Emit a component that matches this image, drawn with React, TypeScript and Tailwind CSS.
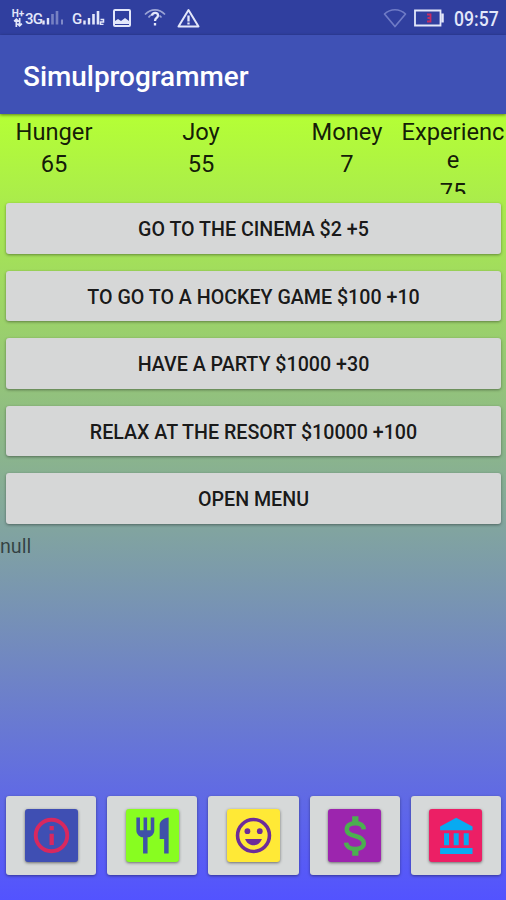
import { ReactNode } from "react"

const stats = [
    { name: "Hunger", value: 65 },
    { name: "Joy", value: 55 },
    { name: "Money", value: 7 },
    { name: "Experience", value: 75 },
]

const actions = [
    "Go to the cinema $2 +5",
    "To go to a hockey game $100 +10",
    "Have a party $1000 +30",
    "Relax at the resort $10000 +100",
    "Open menu",
]

const tabs = [
    {
        name: "Info",
        className: "bg-[#3f4fb3] text-[#d8285f]",
        icon: (
            <>
                <circle cx="12" cy="12" r="8.8" fill="none" stroke="currentColor" strokeWidth="2.2" />
                <path d="M10.9 11h2.4v6.300h-2.400zM10.900 6.700h2.400v2.300h-2.400z" />
            </>
        ),
    },
    {
        name: "Food",
        className: "bg-[#88fd20] text-[#3f51a8]",
        icon: <path d="M11 9H9V2H7v7H5V2H3v7c0 2.12 1.66 3.84 3.75 3.97V22h2.5v-9.03C11.34 12.84 13 11.12 13 9V2h-2v7zm5-3v8h2.5v8H21V2c-2.76 0-5 2.24-5 4z" />,
    },
    {
        name: "Joy",
        className: "bg-[#ffe936] text-[#6d2c99]",
        icon: (
            <>
                <circle cx="12" cy="12" r="8.900" fill="none" stroke="currentColor" strokeWidth="2" />
                <circle cx="8.600" cy="9.600" r="1.600" />
                <circle cx="15.500" cy="9.600" r="1.600" />
                <path d="M7.300 14h9.400c-.8 2.100-2.500 3.500-4.700 3.500S8.100 16.100 7.300 14z" />
            </>
        ),
    },
    {
        name: "Money",
        className: "bg-[#9c25ae] text-[#4caf50]",
        icon: (
            <>
                <path
                    d="M17.200 8.600C17 6.300 15 5.200 12.400 5.200 9.600 5.200 7.700 6.500 7.700 8.500c0 2.500 2.300 3.200 4.700 3.800 2.600.7 4.800 1.700 4.800 4 0 2.200-2.200 3.200-4.800 3.200-2.800 0-4.900-1.200-5.100-3.500"
                    fill="none"
                    stroke="currentColor"
                    strokeWidth="2.500"
                />
                <path d="M10.700 1.200h3.500v4h-3.500zM10.700 19.500h3.500v3.800h-3.500z" />
            </>
        ),
    },
    {
        name: "Bank",
        className: "bg-[#ec1f65] text-[#08aaf1]",
        icon: <path d="M12.400 2.100 21.500 7v2H3.400V7zM5.600 10.800h2.800v6.700H5.600zM11 10.800h2.800v6.700H11zM16.600 10.800h2.800v6.700h-2.800zM3.400 19h18.100v3.300H3.400z" />,
    },
]

const StatusIcon = ({ className, viewBox, children }: { className: string, viewBox: string, children: ReactNode }) => (
    <svg className={className} viewBox={viewBox} fill="none" stroke="currentColor">{children}</svg>
)

const Signal = ({ dim }: { dim: boolean }) => (
    <StatusIcon className="h-[15px] w-[22px] shrink-0" viewBox="0 0 22 15">
        <path d="M1.500 14.500v-4M6 14.500V8" strokeWidth="2.400" />
        <path d="M10.500 14.500V4M15 14.500V1" strokeWidth="2.600" opacity={dim ? 0.4 : 1} />
        <path d={dim ? "M20 9.500v5" : "M17.500 9.500h3v2.500h-3v2.500h3"} strokeWidth="1.500" opacity={dim ? 0.6 : 1} />
    </StatusIcon>
)

const StatusBar = () => (
    <div className="flex h-[35px] shrink-0 items-center bg-[#303f9f] pl-[11px] pr-2 text-[#e3e7fa]">
        <div className="flex w-[14px] flex-col items-center text-[10px] font-bold leading-[9px]">
            <span>H+</span>
            <StatusIcon className="h-[9px] w-[10px]" viewBox="0 0 9 8">
                <path d="M3 8V1M1 3l2-2 2 2M6 0v7M4 5l2 2 2-2" strokeWidth="1.500" />
            </StatusIcon>
        </div>
        <span className="mt-[3px] w-[17px] text-[15px] font-medium leading-none tracking-[-0.800px]">3G</span>
        <div className="mb-px"><Signal dim /></div>
        <span className="ml-2 mt-[3px] w-[11px] text-[15px] font-medium leading-none">G</span>
        <div className="mb-px"><Signal dim={false} /></div>
        <StatusIcon className="ml-2 h-[18px] w-[18px]" viewBox="0 0 18 18">
            <rect x="1" y="1" width="16" height="16" rx="1" strokeWidth="2" />
            <path d="M2 15v-3l3-2 3 2 4-3 4 3v3z" fill="currentColor" stroke="none" />
        </StatusIcon>
        <StatusIcon className="ml-[13px] h-[19px] w-[22px]" viewBox="0 0 22 18">
            <path d="M1 6C7-.3 15-.3 21 6M4.500 9C5.500 7.500 7 6.500 8.500 6M17.500 9l-2-2" strokeWidth="1.700" opacity=".6" />
            <path d="M8 7C8.500 3.500 14 3.500 14 7c0 2.500-3 2.500-3 5.500M11 14.500v2.500" strokeWidth="2.300" />
        </StatusIcon>
        <StatusIcon className="ml-[11px] h-5 w-[23px]" viewBox="0 0 23 20">
            <path d="M11.500 2 21.500 18.500h-20z" strokeWidth="2" strokeLinejoin="round" />
            <path d="M11.500 7.500v6M11.500 14.500v2" strokeWidth="2.300" />
        </StatusIcon>
        <StatusIcon className="ml-auto h-5 w-6 text-[#6f7bc6]" viewBox="0 0 24 20">
            <path d="M1.500 6C7.500.3 16.500.3 22.500 6L12 18.500z" strokeWidth="1.700" strokeLinejoin="round" />
        </StatusIcon>
        <StatusIcon className="ml-[7px] h-[18px] w-[30px]" viewBox="0 0 30 18">
            <path d="M1 1.500h25.500v15H1z" strokeWidth="1.800" />
            <path d="M28.500 4.500v9" strokeWidth="2.500" />
            <path d="M13 5.500h3.500v7H13M13.500 9h3" stroke="#c52c63" strokeWidth="1.800" />
        </StatusIcon>
        <span className="ml-[10px] mt-[3px] w-[44px] origin-left scale-x-[0.880] whitespace-nowrap text-[20px] font-medium leading-none">09:57</span>
    </div>
)

export default function App() {
    return (
        <div className="flex h-[900px] w-[506px] flex-col overflow-hidden font-['Roboto',sans-serif]">
            <StatusBar />
            <header className="z-10 flex h-[79px] shrink-0 items-center bg-[#3f51b5] pl-[23px] pt-[5px] text-[27.9px] font-medium text-white shadow-[0_1px_3px_rgba(0,0,0,0.5)]">
                Simulprogrammer
            </header>
            <main className="flex min-h-0 flex-1 flex-col bg-linear-to-b/srgb from-[#b5ff35] to-[#5353ff]">
                <div className="grid h-20 shrink-0 grid-cols-[108px_186px_106px_106px] overflow-hidden pt-1 text-center text-[23.7px] leading-[28px] text-black/90">
                    {
                        stats.map((stat) => (
                            <div key={stat.name} className="flex flex-col gap-[3.500px]">
                                <div className="break-all">{stat.name}</div>
                                <div>{stat.value}</div>
                            </div>
                        ))
                    }
                </div>
                <div className="mt-[9px] flex flex-col gap-[17px] pl-[6px] pr-[5px]">
                    {
                        actions.map((action) => (
                            <button
                                key={action}
                                className="h-[50.5px] rounded-[3px] bg-[#d6d7d7] pt-[3.500px] text-[19.650px] font-medium uppercase text-black/90 shadow-[0_1px_3px_rgba(0,0,0,0.4)]"
                            >{action}</button>
                        ))
                    }
                </div>
                <p className="mt-[11px] text-[19.7px] leading-[23px] text-black/60">null</p>
                <nav className="mb-[25px] mt-auto grid grid-cols-5 gap-[11px] pl-[6px] pr-[5px]">
                    {
                        tabs.map((tab) => (
                            <button
                                key={tab.name}
                                aria-label={tab.name}
                                className="flex h-[79px] items-center justify-center rounded-[3px] bg-[#d6d9d9] shadow-[0_1px_3px_rgba(0,0,0,0.4)]"
                            >
                                <span className={`flex size-[53px] items-center justify-center rounded-[3px] shadow-[0_1px_3px_rgba(0,0,0,0.5)] ${tab.className}`}>
                                    <svg className="size-[43px]" viewBox="0 0 24 24" fill="currentColor">{tab.icon}</svg>
                                </span>
                            </button>
                        ))
                    }
                </nav>
            </main>
        </div>
    )
}
